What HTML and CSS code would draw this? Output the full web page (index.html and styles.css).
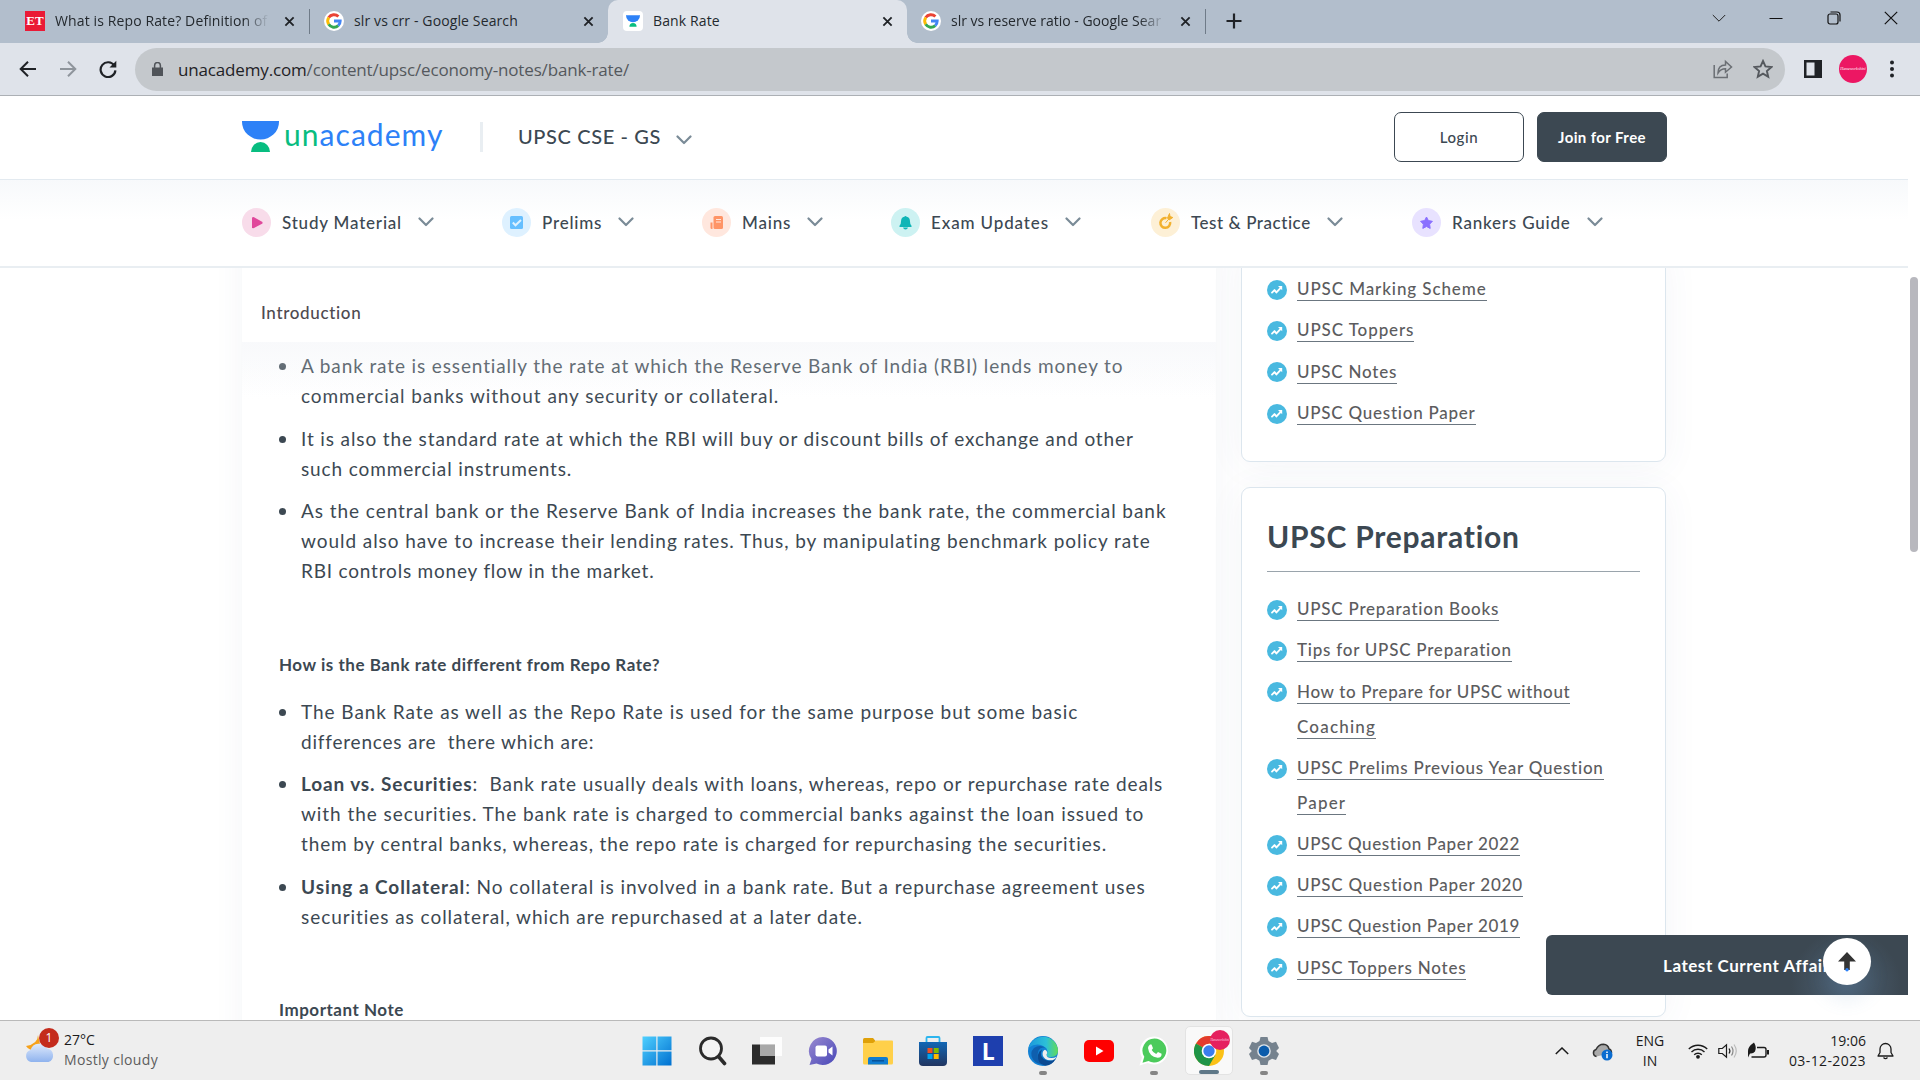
FILE: index.html
```html
<!DOCTYPE html>
<html lang="en">
<head>
<meta charset="utf-8">
<title>Bank Rate</title>
<link rel="stylesheet" href="styles.css">
</head>
<body>
<svg class="defs" aria-hidden="true">
  <symbol id="x" viewBox="0 0 12 12"><path d="M1.5 1.5l9 9M10.5 1.5l-9 9" fill="none" stroke="#1f2226" stroke-width="2"/></symbol>
  <symbol id="google" viewBox="0 0 20 20"><circle cx="10" cy="10" r="10" fill="#fff"/><g fill="none" stroke-width="2.9"><path d="M4.7 6.6A6.2 6.2 0 0 1 14.4 5.6" stroke="#ea4335"/><path d="M4.8 13.4a6.2 6.2 0 0 1 0-6.9" stroke="#fbbc05"/><path d="M14.2 14.6A6.2 6.2 0 0 1 4.7 13.3" stroke="#34a853"/><path d="M10 10h6.2c0 2-.7 3.5-2 4.6" stroke="#4285f4"/></g></symbol>
  <symbol id="una" viewBox="0 0 37 31"><path d="M0 0h37v1a18.5 17.5 0 0 1-37 0z" fill="#2d81f7"/><path d="M9 31a9.5 10 0 0 1 19 0z" fill="#08bd80"/></symbol>
  <symbol id="down" viewBox="0 0 16 10"><path d="M1.5 1.5L8 8l6.500-6.500" fill="none" stroke="#7a8b97" stroke-width="2.200" stroke-linecap="round" stroke-linejoin="round"/></symbol>
  <symbol id="trend" viewBox="0 0 20 20"><circle cx="10" cy="10" r="10" fill="#49b9e0"/><path d="M5 12.600l2.500-2.500 1.900 2.300 4.300-4.600" fill="none" stroke="#fff" stroke-width="1.900" stroke-linecap="round" stroke-linejoin="round"/><path d="M11 6h4.200v4.200z" fill="#fff"/></symbol>
</svg>

<div class="tabs">
  <div class="tab tab-1"><span class="et">ET</span><span class="tab-title fade">What is Repo Rate? Definition of</span><svg class="close"><use href="#x"/></svg></div>
  <div class="tab tab-2"><svg class="fav"><use href="#google"/></svg><span class="tab-title">slr vs crr - Google Search</span><svg class="close"><use href="#x"/></svg></div>
  <div class="tab tab-3"><span class="fav fav-una"><svg><use href="#una"/></svg></span><span class="tab-title">Bank Rate</span><svg class="close"><use href="#x"/></svg></div>
  <div class="tab tab-4"><svg class="fav"><use href="#google"/></svg><span class="tab-title fade">slr vs reserve ratio - Google Sear</span><svg class="close"><use href="#x"/></svg></div>
  <svg class="plus" viewBox="0 0 16 16"><path d="M8 .5v15M.5 8h15" stroke="#1f2226" stroke-width="2.200"/></svg>
  <div class="win">
    <svg viewBox="0 0 14 14"><path d="M.8 4L7 10.200 13.200 4" fill="none" stroke="#222"/></svg>
    <svg viewBox="0 0 14 14"><path d="M.5 7.500h13" stroke="#111"/></svg>
    <svg viewBox="0 0 14 14"><g fill="none" stroke="#111" stroke-width="1.200"><rect x="1" y="3" width="10" height="10" rx="2"/><path d="M3.500 1H10q3 0 3 3v6.500"/></g></svg>
    <svg viewBox="0 0 14 14"><path d="M.8.8l12.400 12.400M13.200.8L.8 13.200" stroke="#111" stroke-width="1.200"/></svg>
  </div>
</div>

<div class="toolbar">
  <svg class="tb" viewBox="0 0 18 18"><path d="M17 9H2M9 1.700L1.700 9 9 16.300" fill="none" stroke="#1f2226" stroke-width="2"/></svg>
  <svg class="tb" viewBox="0 0 18 18"><path d="M1 9h15M9 1.700L16.300 9 9 16.300" fill="none" stroke="#8f959c" stroke-width="2"/></svg>
  <svg class="tb" viewBox="0 0 18 18"><path d="M15.300 5.700A7.400 7.400 0 1 0 16.400 10.300" fill="none" stroke="#1f2226" stroke-width="2.200"/><path d="M10.500 7.500h6.800V.8z" fill="#1f2226"/></svg>
  <div class="url">
    <svg class="lock" viewBox="0 0 11 14"><path d="M0 5.500h11V14H0z" fill="#505459"/><path d="M2.600 6V3.400a2.900 2.900 0 0 1 5.800 0V6" fill="none" stroke="#505459" stroke-width="1.500"/></svg>
    <span class="addr"><b>unacademy.com</b>/content/upsc/economy-notes/bank-rate/</span>
    <svg class="share" viewBox="0 0 20 20"><g fill="none" stroke="#6b6f74" stroke-width="1.500"><path d="M1.200 6v12.500h13V14.500"/><path d="M5 14c0-5.500 3-8 7.500-8V2.500L18.500 8l-6 5.200V9.800C9 9.800 6.800 11 5 14z"/></g></svg>
    <svg class="star" viewBox="0 0 18 18"><path d="M9 1.800l2.200 4.900 5.400.5-4.100 3.600 1.200 5.200L9 13.200 4.300 16l1.200-5.200L1.400 7.200l5.400-.5z" fill="none" stroke="#55595e" stroke-width="1.700"/></svg>
  </div>
  <svg class="panel" viewBox="0 0 18 18"><path d="M0 0h18v18H0z" fill="#1f2226"/><path d="M2.500 2.500h8v13h-8z" fill="#dfe3ea"/></svg>
  <span class="avatar">Hameworkshini</span>
  <svg class="dots" viewBox="0 0 4 18"><g fill="#1f2226"><circle cx="2" cy="2.500" r="2"/><circle cx="2" cy="9" r="2"/><circle cx="2" cy="15.500" r="2"/></g></svg>
</div>

<div class="page">
  <div class="site">
    <header class="header">
      <svg class="logo"><use href="#una"/></svg>
      <span class="brand"><i>un</i>academy</span>
      <span class="rule"></span>
      <span class="goal">UPSC CSE - GS</span>
      <svg class="down"><use href="#down"/></svg>
      <div class="buttons"><a class="btn">Login</a><a class="btn dark">Join for Free</a></div>
    </header>
    <nav class="nav">
      <a class="n1"><svg class="ni" viewBox="0 0 29 29"><circle cx="14.500" cy="14.500" r="14.500" fill="#f8dcea"/><path d="M10 9.500v10.500l1.500.3 9-4.700v-1.700l-9-4.900z" fill="#e0489b"/></svg><span>Study Material</span><svg class="down"><use href="#down"/></svg></a>
      <a class="n2"><svg class="ni" viewBox="0 0 29 29"><circle cx="14.500" cy="14.500" r="14.500" fill="#def1ff"/><rect x="8" y="8" width="13" height="13" rx="1.500" fill="#66bfff"/><path d="M10.800 14.500l2.700 2.800 5.500-5.300" fill="none" stroke="#def1ff" stroke-width="2"/></svg><span>Prelims</span><svg class="down"><use href="#down"/></svg></a>
      <a class="n3"><svg class="ni" viewBox="0 0 29 29"><circle cx="14.500" cy="14.500" r="14.500" fill="#ffe7de"/><rect x="11.500" y="8" width="9.500" height="13" rx="1.500" fill="#ff9466"/><path d="M8.500 14.500h2v6.500h-.8q-1.200 0-1.200-1.500z" fill="#ff9466"/><path d="M14 11.500h5M14 14h5" stroke="#ffe7de"/></svg><span>Mains</span><svg class="down"><use href="#down"/></svg></a>
      <a class="n4"><svg class="ni" viewBox="0 0 29 29"><circle cx="14.500" cy="14.500" r="14.500" fill="#cdf2f2"/><path d="M8.500 19v-1.200q1.500-1 1.500-4.300 0-4 3.300-4.700 1.200-1.800 2.400 0 3.300.7 3.300 4.700 0 3.300 1.500 4.300V19z" fill="#0fb5b7"/><path d="M12 19.500h5q-.5 2-2.500 2t-2.500-2z" fill="#0fb5b7"/></svg><span>Exam Updates</span><svg class="down"><use href="#down"/></svg></a>
      <a class="n5"><svg class="ni" viewBox="0 0 29 29"><circle cx="14.500" cy="14.500" r="14.500" fill="#fdf0d6"/><path d="M15.500 10.200a4.900 4.900 0 1 0 3.600 3.800" fill="none" stroke="#f2b12f" stroke-width="2.500"/><path d="M14.500 14.800l3.500-4M16.500 10l2-4.500.5 3 2.800 1-3.800 2.500z" fill="#f2b12f" stroke="#f2b12f" stroke-width="1"/></svg><span>Test &amp; Practice</span><svg class="down"><use href="#down"/></svg></a>
      <a class="n6"><svg class="ni" viewBox="0 0 29 29"><circle cx="14.500" cy="14.500" r="14.500" fill="#e8e2ff"/><path d="M14.500 9l1.900 3.600 4 .7-2.800 2.900.6 4.200-3.700-1.900-3.700 1.900.6-4.200-2.800-2.900 4-.7z" fill="#8a70ff" stroke="#8a70ff" stroke-linejoin="round"/></svg><span>Rankers Guide</span><svg class="down"><use href="#down"/></svg></a>
    </nav>
    <main class="content">
      <article class="article">
        <div class="sticky">Introduction</div>
        <div class="veil"></div>
        <ul class="points first">
          <li><span class="snug">A bank rate is essentially the rate at which the Reserve Bank of India (RBI) lends money to</span><br>commercial banks without any security or collateral.</li>
          <li><span class="snug">It is also the standard rate at which the RBI will buy or discount bills of exchange and other</span><br><span class="snug">such commercial instruments.</span></li>
          <li>As the central bank or the Reserve Bank of India increases the bank rate, the commercial bank<br>would also have to increase their lending rates. Thus, by manipulating benchmark policy rate<br><span class="tight">RBI controls money flow in the market.</span></li>
        </ul>
        <h3>How is the Bank rate different from Repo Rate?</h3>
        <ul class="points">
          <li>The Bank Rate as well as the Repo Rate is used for the same purpose but some basic<br><span class="tight">differences are&nbsp; there which are:</span></li>
          <li><span class="snug"><b>Loan vs. Securities</b>:&nbsp; Bank rate usually deals with loans, whereas, repo or repurchase rate deals</span><br>with the securities. The bank rate is charged to commercial banks against the loan issued to<br><span class="snug">them by central banks, whereas, the repo rate is charged for repurchasing the securities.</span></li>
          <li><b>Using a Collateral</b>: No collateral is involved in a bank rate. But a repurchase agreement uses<br>securities as collateral, which are repurchased at a later date.</li>
        </ul>
        <h3>Important Note</h3>
      </article>
      <aside class="side">
        <section class="card top">
          <ul class="links">
            <li><svg><use href="#trend"/></svg><div><a class="wide">UPSC Marking Scheme</a></div></li>
            <li><svg><use href="#trend"/></svg><div><a class="wide">UPSC Toppers</a></div></li>
            <li><svg><use href="#trend"/></svg><div><a>UPSC Notes</a></div></li>
            <li><svg><use href="#trend"/></svg><div><a>UPSC Question Paper</a></div></li>
          </ul>
        </section>
        <section class="card prep">
          <h2>UPSC Preparation</h2>
          <ul class="links">
            <li><svg><use href="#trend"/></svg><div><a>UPSC Preparation Books</a></div></li>
            <li><svg><use href="#trend"/></svg><div><a>Tips for UPSC Preparation</a></div></li>
            <li><svg><use href="#trend"/></svg><div><a class="narrow">How to Prepare for UPSC without</a><br><a class="wider">Coaching</a></div></li>
            <li><svg><use href="#trend"/></svg><div><a>UPSC Prelims Previous Year Question</a><br><a class="wider">Paper</a></div></li>
            <li><svg><use href="#trend"/></svg><div><a class="narrow">UPSC Question Paper 2022</a></div></li>
            <li><svg><use href="#trend"/></svg><div><a>UPSC Question Paper 2020</a></div></li>
            <li><svg><use href="#trend"/></svg><div><a class="narrow">UPSC Question Paper 2019</a></div></li>
            <li><svg><use href="#trend"/></svg><div><a>UPSC Toppers Notes</a></div></li>
          </ul>
        </section>
      </aside>
    </main>
    <div class="latest">Latest Current Affairs</div>
    <div class="totop"><svg viewBox="0 0 18 20"><path d="M9 0l9 9.500h-6.200V18H6.200V9.500H0z" fill="#333"/><circle cx="9" cy="17.800" r="1.700" fill="#2d81f7"/></svg></div>
  </div>
  <div class="scroll"></div>
</div>

<footer class="taskbar">
  <div class="weather">
    <div class="wicon"><svg viewBox="0 0 32 32"><defs><linearGradient id="cl" x1="0" y1="0" x2="0" y2="1"><stop offset="0" stop-color="#dfeafc"/><stop offset="1" stop-color="#8fb3ee"/></linearGradient></defs><path d="M14 3q0 9-12 11 5 7 15 3z" fill="#f6a21c"/><path d="M7 30a6.200 6.200 0 0 1-.5-12A9 9 0 0 1 23 16.500a7 7 0 0 1 1.500 13.500z" fill="url(#cl)"/></svg><span class="badge">1</span></div>
    <div class="wtext"><span>27°C</span><span class="mute">Mostly cloudy</span></div>
  </div>
  <div class="apps">
    <span><svg viewBox="0 0 30 30"><defs><linearGradient id="w" x1="0" y1="0" x2="1" y2="1"><stop offset="0" stop-color="#4fd0ff"/><stop offset="1" stop-color="#0070d0"/></linearGradient></defs><path d="M.5.500h13.800v13.800H.5zM15.500.500h14v13.800h-14zM.5 15.500h13.800v14H.5zM15.500 15.500h14v14h-14z" fill="url(#w)"/></svg></span>
    <span><svg viewBox="0 0 30 30"><circle cx="14" cy="12.500" r="10.500" fill="#f3f3f3" stroke="#2b2b2b" stroke-width="2.800"/><path d="M21.500 20.500l6 7" stroke="#2b2b2b" stroke-width="3.600" stroke-linecap="round"/></svg></span>
    <span><svg viewBox="0 0 30 30"><path d="M0 8.500h23v20H0z" fill="#2c2c2c"/><path d="M8 1h22v19H8z" fill="#fff" opacity=".85"/><path d="M8 8.500h15V20H8z" fill="#a8a8a8"/></svg></span>
    <span><svg viewBox="0 0 30 30"><defs><linearGradient id="ch" x1="0" y1="0" x2="1" y2="1"><stop offset="0" stop-color="#9a8ad0"/><stop offset="1" stop-color="#4747b8"/></linearGradient></defs><path d="M15 1a14 14 0 1 1-6.500 26.500L1.500 29l2-6A14 14 0 0 1 15 1z" fill="url(#ch)"/><rect x="7.500" y="9.500" width="11.500" height="11" rx="2" fill="#fff"/><path d="M20.500 13.500l4-3v9l-4-3z" fill="#fff"/></svg></span>
    <span><svg viewBox="0 0 30 30"><path d="M0 8V3.500Q0 2 1.500 2H10l3 3.500L10 9z" fill="#dfa008"/><path d="M0 7h10l3-2.500h16q1 0 1 1V27q0 1.500-1.500 1.500h-27Q0 28.500 0 27z" fill="#ffd04a"/><path d="M5 28.500V23q0-2 2-2h16q2 0 2 2v5.500z" fill="#0f7cd0"/><path d="M9 24.800h12" stroke="#064f95" stroke-width="1.400"/></svg></span>
    <span><svg viewBox="0 0 30 30"><defs><linearGradient id="st" x1="0" y1="0" x2="0" y2="1"><stop offset="0" stop-color="#1267b5"/><stop offset="1" stop-color="#213560"/></linearGradient></defs><path d="M8.500 7V2q0-1 1-1h11q1 0 1 1v5" fill="none" stroke="#2cb5ee" stroke-width="1.800"/><path d="M1 6h28v20q0 4-4 4H5q-4 0-4-4z" fill="url(#st)"/><path d="M9.500 12h5v5h-5z" fill="#f25022"/><path d="M15.700 12h5v5h-5z" fill="#7fba00"/><path d="M9.500 18h5v5h-5z" fill="#00a4ef"/><path d="M15.700 18h5v5h-5z" fill="#ffb900"/></svg></span>
    <span><b class="ltile">L</b></span>
    <span class="run"><svg viewBox="0 0 30 30"><defs><linearGradient id="e1" x1="0" y1="0" x2="1" y2="0"><stop offset="0" stop-color="#1c98dc"/><stop offset=".6" stop-color="#2cc0d8"/><stop offset="1" stop-color="#62dc55"/></linearGradient></defs><circle cx="15" cy="15" r="15" fill="#1280d4"/><path d="M.5 12A15 15 0 0 1 30 14.500q0 6-7 6.500-5 0-4.500-2.500 2-2.500 0-6Q10 5 .5 12z" fill="url(#e1)"/><path d="M18.500 12.500q-5-3-8 2-3 8 4 14-6-.5-9.500-5Q1 17 6 12q6-4 12.500.5z" fill="#0f5fae"/><path d="M14 13.500q-4 8 5 11 5 1 9-2-4 7-11 7.300-8-1.800-7-11 1-4 4-5.300z" fill="#0b4a92"/><path d="M18.500 18.500q0 3.500 5 3.500 3 0 5-1.500-1 3-4 3.700-8 1-9.800-5-.7-4 2.300-5.400 3.500 2 1.500 4.700z" fill="#eee"/></svg></span>
    <span><svg viewBox="0 0 30 30"><rect y="4" width="30" height="22" rx="5" fill="#f00"/><path d="M12 10.500v9l7.500-4.500z" fill="#fff"/></svg></span>
    <span class="run"><svg viewBox="0 0 30 30"><path d="M15.500.5a14 14 0 1 1-6.800 26.500L.5 29.500l2.500-8A14 14 0 0 1 15.500.500z" fill="#fff"/><path d="M15.500 2.500a12 12 0 1 1-6 22.500l-6 1.800 1.800-6A12 12 0 0 1 15.500 2.500z" fill="#4ccb5c"/><path d="M11 8.500h1.500L14 12.200 12.700 14q1.500 2.800 4.500 4l1.800-2 3.600 1.800q.2 4-4 4Q10 20.500 9 12q0-2 2-3.500z" fill="#fff"/></svg></span>
    <span class="run active"><svg viewBox="0 0 30 30"><circle cx="15" cy="15" r="15" fill="#fbc116"/><path d="M15 15L2 7.500A15 15 0 0 1 28 7.500H15z" fill="#e33b2e"/><path d="M2 7.500A15 15 0 0 0 15 30l6.500-11.300L15 15z" fill="#1f9447"/><circle cx="15" cy="15" r="7.300" fill="#fff"/><circle cx="15" cy="15" r="5.700" fill="#3b7ded"/></svg><em>Hameworkshini</em></span>
    <span class="run"><svg viewBox="0 0 30 30"><path d="M11.500 1h7l1 4 3.500 2 4-1.200L30 12l-2.800 3L30 18l-3 6-4-1.200-3.500 2-1 4.200h-7l-1-4.200-3.500-2L3 24l-3-6 2.800-3L0 12l3-6.200L7 7l3.500-2z" fill="#75828e"/><circle cx="15" cy="15" r="6.800" fill="#dfe5ea"/><circle cx="15" cy="15" r="5.400" fill="#0b5cab"/></svg></span>
  </div>
  <div class="tray">
    <svg class="up" viewBox="0 0 14 8"><path d="M.8 7L7 1l6.200 6" fill="none" stroke="#1b1b1b" stroke-width="1.500"/></svg>
    <svg class="cloud" viewBox="0 0 20 18"><path d="M4 13.500a3.600 3.600 0 0 1-.5-7Q6 1.200 11 1.200q4.500.2 5.500 4.800 2.500.5 2.500 4" fill="#aaa" stroke="#333" stroke-width="1.500"/><circle cx="14.500" cy="12" r="5.500" fill="#0b6cd0"/><path d="M14.500 11v4.200M14.500 8.500v1.400" stroke="#fff" stroke-width="1.500"/></svg>
    <div class="lang"><span>ENG</span><span>IN</span></div>
    <svg class="wifi" viewBox="0 0 20 16"><g fill="none" stroke="#1b1b1b" stroke-width="1.400"><path d="M.8 6a13 13 0 0 1 18.400 0M3.500 9a9.200 9.200 0 0 1 13 0M6.200 11.800a5.400 5.400 0 0 1 7.600 0"/></g><circle cx="10" cy="13.800" r="1.900" fill="#1b1b1b"/></svg>
    <svg class="snd" viewBox="0 0 20 16"><g fill="none" stroke="#1b1b1b" stroke-width="1.200"><path d="M.8 5.500h3.500L8.500 1.800v12.400L4.300 10.500H.8z"/><path d="M11 5.500q1.800 2.500 0 5"/><path d="M13.500 3.500q3 4.500 0 9" stroke="#888"/><path d="M16 1.500q4.500 6.500 0 13" stroke="#bbb"/></g></svg>
    <svg class="bat" viewBox="0 0 21 17"><path d="M9 5.500h7q2 0 2 2V13q0 2-2 2H3.500" fill="none" stroke="#1b1b1b" stroke-width="1.400"/><path d="M19 8h2v4.500h-2z" fill="#1b1b1b"/><path d="M0 9q0-4.500 6-8.500 3 5 1 9-2 2.500-5 2L0 15.500z" fill="#1b1b1b"/></svg>
    <div class="clock"><span>19:06</span><span class="date">03-12-2023</span></div>
    <svg class="bell" viewBox="0 0 17 18"><path d="M1 14h15l-2-3.500V7A5.500 5.500 0 0 0 3 7v3.500z" fill="none" stroke="#1b1b1b" stroke-width="1.300" stroke-linejoin="round"/><path d="M6.500 15.500q2 2.300 4 0" fill="none" stroke="#1b1b1b" stroke-width="1.300"/></svg>
  </div>
</footer>
</body>
</html>
```
FILE: styles.css
```css
* { box-sizing: border-box; }
body { margin: 0; width: 1920px; height: 1080px; overflow: hidden; display: grid; grid-template-rows: 43px 53px 924px 60px; font-family: Lato, "Liberation Sans", sans-serif; color: #3c4852; background: #fff; }
ul, h2, h3 { margin: 0; padding: 0; list-style: none; }
svg { display: block; flex: none; }
.defs { position: absolute; width: 0; height: 0; }

/* Browser tabs */
.tabs, .toolbar, .taskbar { font-family: "Open Sans", "Noto Sans", sans-serif; }
.tabs { background: #b2becc; display: flex; }
.tab { display: flex; align-items: center; height: 43px; padding-bottom: 1px; font-size: 14px; letter-spacing: .12px; color: #24292e; position: relative; }
.tab-1 { width: 310px; padding-left: 25px; }
.tab-2 { width: 298px; padding-left: 14px; }
.tab-3 { width: 299px; padding-left: 15px; background: #dfe3ea; border-radius: 10px 10px 0 0; }
.tab-4 { width: 299px; padding-left: 14px; letter-spacing: 0; }
.tab-1::after, .tab-4::after { content: ""; position: absolute; right: 0; top: 9px; width: 1px; height: 25px; background: #6f7b88; }
.tab-3::before, .tab-3::after { content: ""; position: absolute; bottom: 0; width: 10px; height: 10px; }
.tab-3::before { left: -10px; background: radial-gradient(circle at 0 0, #b2becc 9.5px, #dfe3ea 10px); }
.tab-3::after { right: -10px; background: radial-gradient(circle at 100% 0, #b2becc 9.5px, #dfe3ea 10px); }
.et { width: 20px; height: 20px; background: #ea1a36; color: #fff; font: bold 13px/20px "Liberation Serif", serif; letter-spacing: 0; text-align: center; }
.fav { width: 20px; height: 20px; }
.fav-una { background: #fff; border-radius: 4px; display: grid; place-items: center; }
.fav-una svg { width: 14px; height: 12px; overflow: hidden; }
.tab-title { width: 214px; margin-left: 10px; padding-bottom: 2px; overflow: hidden; white-space: nowrap; }
.fade { -webkit-mask-image: linear-gradient(90deg, #000 88%, transparent); mask-image: linear-gradient(90deg, #000 88%, transparent); }
.close { width: 11px; height: 11px; margin-left: 15px; }
.plus { width: 16px; height: 16px; margin: 13px 0 0 20px; }
.win { margin-left: auto; display: flex; gap: 43.300px; padding: 11px 22px 0 0; }
.win svg { width: 14px; height: 14px; }

/* Address bar */
.toolbar { background: #dfe3ea; border-bottom: 1px solid #acb0b5; display: flex; align-items: center; padding-left: 19px; }
.tb { width: 18px; height: 18px; margin-right: 22px; }
.url { width: 1650px; height: 43px; border-radius: 22px; background: #c4c8cc; display: flex; align-items: center; margin-left: -4px; padding-left: 17px; }
.lock { width: 11px; height: 14px; }
.addr { margin-left: 15px; font-size: 17px; letter-spacing: -.16px; color: #54585d; white-space: nowrap; }
.addr b { font-weight: 400; color: #1f2226; }
.share { width: 20px; height: 20px; margin-left: auto; }
.star { width: 20px; height: 20px; margin: 0 12px 0 20px; }
.panel { width: 18px; height: 18px; margin-left: 19px; }
.avatar { width: 28px; height: 28px; margin: 0 23px 0 17px; border-radius: 50%; background: #ec1763; color: #fff; font: italic 4px/28px "Liberation Serif", serif; text-align: center; }
.dots { width: 4px; height: 18px; margin-right: 22px; }

/* Site header */
.page { position: relative; display: flex; overflow: hidden; }
.site { width: 1908px; height: 924px; position: relative; overflow: hidden; }
.scroll { width: 8px; height: 275px; margin: 181px 0 0 2px; border-radius: 4px; background: #b8b8be; }
.header, .nav { position: relative; z-index: 2; }
.header { height: 84px; background: #fff; border-bottom: 1px solid #e3eaf0; display: flex; align-items: center; padding: 0 241px 2px 242px; white-space: nowrap; }
.logo { width: 37px; height: 31px; }
.brand { margin: -5px 0 0 5px; width: 159px; font-size: 30px; letter-spacing: 1.050px; line-height: 30px; color: #2d81f7; }
.brand i { font-style: normal; color: #08bd80; }
.rule { width: 3px; height: 30px; margin: 0 35px 0 37px; background: #e9eef2; }
.goal { width: 143px; margin: -1px 15px 0 0; font-size: 20px; font-weight: 500; letter-spacing: .625px; }
.down { width: 16px; height: 10px; }
.header .down { margin-top: 7px; }
.buttons { display: flex; gap: 13px; margin-left: auto; }
.btn { width: 130px; height: 50px; border: 1px solid #3c4852; border-radius: 7px; display: grid; place-items: center; font-size: 15px; font-weight: 500; letter-spacing: .6px; }
.btn.dark { background: #3c4852; color: #fff; font-weight: 700; letter-spacing: .4px; }
.nav { height: 88px; border-bottom: 2px solid #e9eef2; background: linear-gradient(#f7f9fb, #fff 40px); display: flex; align-items: center; padding: 0 0 2px 242px; font-size: 17px; font-weight: 500; letter-spacing: .8px; white-space: nowrap; }
.nav a { display: flex; align-items: center; }
.nav span { margin: 0 16px 0 11px; }
.ni { width: 29px; height: 29px; }
.n1 { width: 260px; }
.n2 { width: 200px; }
.n3 { width: 189px; }
.n4 { width: 260px; letter-spacing: .876px; }
.n5 { width: 261px; letter-spacing: .551px; }

/* Article */
.content { display: flex; align-items: flex-start; padding-left: 242px; height: 752px; }
.article { width: 974px; height: 900px; margin-top: -60px; padding-top: 60px; box-shadow: 0 0 30px rgba(60, 90, 130, .06); background: #fff; }
.sticky { height: 74px; padding: 32px 19px 0; font-size: 17px; font-weight: 500; letter-spacing: .65px; line-height: 26px; color: #4f4a50; }
.veil { height: 60px; margin-bottom: -60px; position: relative; z-index: 1; background: linear-gradient(rgba(249, 250, 252, .35), rgba(255, 255, 255, 0)); }
.points { padding-left: 59px; font-size: 19px; letter-spacing: .94px; line-height: 30px; white-space: nowrap; }
.snug { letter-spacing: .875px; }
.tight { letter-spacing: .8px; }
.points.first { padding-top: 9px; background: linear-gradient(#f8f9fb, #fff 55px); }
.points li { margin-bottom: 12.500px; position: relative; }
.points li::before { content: ""; position: absolute; left: -22px; top: 12px; width: 7px; height: 7px; border-radius: 50%; background: #3c4852; }
h3 { padding-left: 37px; font-size: 17px; letter-spacing: .52px; line-height: 30px; font-weight: 700; margin: 63.500px 0 17px; white-space: nowrap; }

/* Sidebar */
.side { width: 425px; margin-left: 25px; }
.card { border: 1px solid #dce6ee; border-radius: 9px; background: #fff; box-shadow: 0 4px 36px rgba(60, 90, 130, .06); padding: 0 25px; }
.card.top { height: 213px; margin-top: -19px; padding-top: 21px; margin-bottom: 25px; }
.card.prep { height: 530px; }
h2 { height: 84px; padding-top: 29px; font-size: 30px; letter-spacing: .75px; line-height: 38px; font-weight: 700; border-bottom: 1px solid #9aa4ac; margin-bottom: 19px; }
.links { font-size: 17px; line-height: 35px; font-weight: 500; letter-spacing: .76px; color: #5c5c5e; white-space: nowrap; }
.links li { display: flex; gap: 10px; margin-bottom: 6.200px; }
.links div { margin: -1px 0 1px; }
.links svg { width: 20px; height: 20px; margin-top: 9px; }
.links a { display: inline-block; line-height: 22px; height: 23px; border-bottom: 1px solid #6b7680; vertical-align: middle; }
.narrow { letter-spacing: .64px; }
.wide { letter-spacing: .9px; }
.wider { letter-spacing: 1.200px; }

/* Floating controls */
.latest { position: absolute; z-index: 3; left: 1546px; top: 839px; width: 362px; height: 60px; border-radius: 6px 0 0 6px; background: radial-gradient(circle at 300px 50px, #4c6073, #3c4852 55px); color: #fff; padding: 0 0 0 117px; line-height: 61px; font-size: 17px; font-weight: 700; letter-spacing: .55px; white-space: nowrap; }
.totop { position: absolute; z-index: 3; left: 1823px; top: 842px; width: 48px; height: 47px; border-radius: 50%; background: #fff; display: grid; place-items: center; box-shadow: 0 14px 20px rgba(90, 140, 190, .14); }
.totop svg { width: 18px; height: 20px; }

/* Taskbar */
.taskbar { background: #eee; border-top: 1px solid #b9b9b9; display: flex; position: relative; color: #1b1b1b; font-size: 14px; }
.weather { display: flex; width: 633px; padding: 9px 0 0 24px; }
.wicon { position: relative; width: 32px; height: 34px; padding-top: 2px; }
.wicon svg { width: 32px; height: 32px; }
.badge { position: absolute; left: 15px; top: -2px; width: 20px; height: 20px; border-radius: 50%; background: #c42b1c; color: #fff; font-size: 12px; line-height: 20px; text-align: center; }
.wtext { margin-left: 8px; display: flex; flex-direction: column; line-height: 20px; white-space: nowrap; }
.mute { color: #5d5d5d; letter-spacing: .33px; }
.apps { display: flex; gap: 7.200px; padding-top: 5px; }
.apps span { width: 48px; height: 49px; display: grid; place-items: center; position: relative; border-radius: 5px; }
.apps svg { width: 30px; height: 30px; }
.ltile { width: 30px; height: 30px; background: #1e3fae; color: #fff; font-size: 23px; line-height: 30px; text-align: center; }
.run::after { content: ""; position: absolute; bottom: 0; left: 20px; width: 8px; height: 4px; border-radius: 2px; background: #858585; }
.apps .active { background: #f9f9f9; border: 1px solid #e3e3e3; }
.active::after { width: 20px; left: 13px; background: #5f7888; }
.active em { position: absolute; left: 24px; top: 3px; width: 20px; height: 20px; border-radius: 50%; background: #e5205f; color: #ffd5e2; font: italic 3px/20px "Liberation Serif", serif; text-align: center; }
.tray { margin-left: auto; display: flex; align-items: center; padding-right: 26px; }
.up { width: 14px; height: 8px; }
.cloud { width: 21px; height: 18px; margin: 3px 0 0 23px; }
.lang { width: 36px; margin-left: 19px; text-align: center; line-height: 20px; }
.lang span, .clock span { display: block; }
.wifi { width: 20px; height: 16px; margin-left: 20px; }
.snd { width: 20px; height: 16px; margin-left: 10px; }
.bat { width: 21px; height: 17px; margin-left: 10px; }
.clock { width: 97px; display: flex; flex-direction: column; align-items: flex-end; line-height: 20px; }
.date { letter-spacing: .4px; }
.bell { width: 17px; height: 18px; margin-left: 11px; }
```
